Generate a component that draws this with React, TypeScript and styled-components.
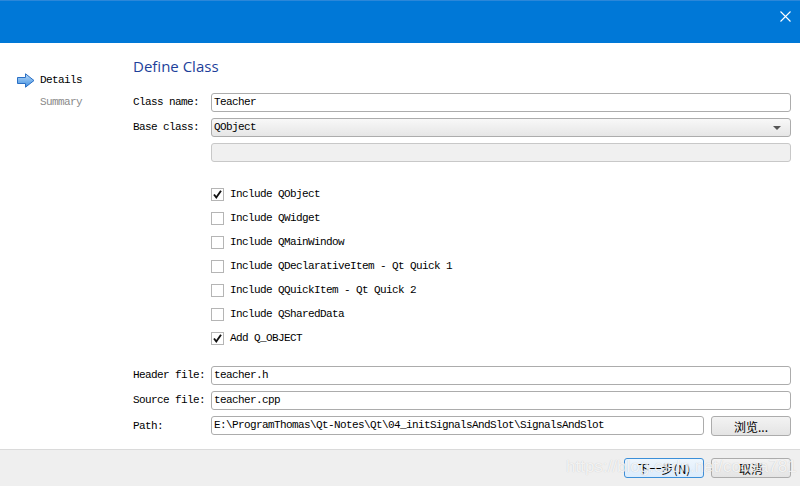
import React from 'react';
import styled, { createGlobalStyle } from 'styled-components';

const GlobalStyle = createGlobalStyle`
  html, body {
    margin: 0;
    padding: 0;
    background: #ffffff;
  }
`;

const mono = `"Liberation Mono", "Noto Sans CJK SC", monospace`;

const Window = styled.div`
  width: 800px;
  height: 486px;
  display: flex;
  flex-direction: column;
  overflow: hidden;
  background: #ffffff;
  font-family: ${mono};
  font-size: 11px;
  letter-spacing: -0.6px;
  color: #000;
`;

const TitleBar = styled.div`
  height: 42px;
  flex-shrink: 0;
  background: #0078d7;
  border-top: 1px solid #2b87d9;
  display: flex;
  justify-content: flex-end;
  align-items: flex-start;
`;

const CloseButton = styled.div`
  width: 24px;
  height: 30px;
  margin-right: 3px;
  display: flex;
  align-items: center;
  justify-content: center;
`;

const Body = styled.div`
  flex: 1;
  display: flex;
`;

const Nav = styled.div`
  width: 132px;
  flex-shrink: 0;
  padding: 26px 0 0 17px;
  box-sizing: border-box;
  display: flex;
  flex-direction: column;
`;

const NavItem = styled.div<{ $active?: boolean }>`
  height: 22px;
  display: flex;
  align-items: center;
  padding-left: ${({ $active }) => ($active ? '0' : '23px')};
  gap: 5px;
  color: ${({ $active }) => ($active ? '#000' : '#8a8a8a')};
`;

const Main = styled.div`
  flex: 1;
  padding: 12px 9px 0 1px;
  display: flex;
  flex-direction: column;
`;

const Title = styled.div`
  font-family: "Open Sans", "Liberation Sans", sans-serif;
  font-size: 15px;
  letter-spacing: 0;
  line-height: 22px;
  height: 22px;
  color: #1d3f9a;
  margin-bottom: 16px;
`;

const FormGrid = styled.div<{ $gap: number }>`
  display: grid;
  grid-template-columns: 78px 1fr;
  row-gap: ${({ $gap }) => $gap}px;
  align-items: center;
`;

const Label = styled.div`
  line-height: 19px;
  white-space: nowrap;
`;

const Field = styled.div<{ $disabled?: boolean }>`
  height: 19px;
  box-sizing: border-box;
  border: 1px solid ${({ $disabled }) => ($disabled ? '#c8c8c8' : '#acacac')};
  border-radius: 3px;
  background: ${({ $disabled }) => ($disabled ? '#f0f0f0' : '#ffffff')};
  padding: 0 2px;
  line-height: 17px;
  white-space: nowrap;
  overflow: hidden;
`;

const Combo = styled(Field)`
  background: linear-gradient(#f8f8f8, #e6e6e6);
  display: flex;
  justify-content: space-between;
  align-items: center;
  padding-right: 9px;
`;

const ComboArrow = styled.span`
  width: 0;
  height: 0;
  border-left: 4px solid transparent;
  border-right: 4px solid transparent;
  border-top: 4px solid #555;
`;

const Checks = styled.div`
  margin: 20px 0 16px 78px;
  display: flex;
  flex-direction: column;
`;

const CheckRow = styled.div`
  height: 24px;
  display: flex;
  align-items: center;
  gap: 6px;
`;

const Box = styled.span`
  width: 13px;
  height: 13px;
  box-sizing: border-box;
  border: 1px solid #b5b5b5;
  background: #fff;
  display: flex;
  align-items: center;
  justify-content: center;
`;

const PathRow = styled.div`
  display: flex;
  gap: 7px;
`;

const Button = styled.div<{ $default?: boolean }>`
  width: 80px;
  height: 20px;
  box-sizing: border-box;
  border: 1px solid ${({ $default }) => ($default ? '#3c8fd8' : '#acacac')};
  border-radius: 3px;
  background: ${({ $default }) =>
    $default ? 'linear-gradient(#eef6fd, #dcecfc)' : 'linear-gradient(#f3f3f3, #e4e4e4)'};
  display: flex;
  align-items: center;
  justify-content: center;
  font-family: "Noto Sans CJK SC", ${mono};
  font-size: 12px;
  letter-spacing: 0;
  flex-shrink: 0;
`;

const Footer = styled.div`
  height: 37px;
  flex-shrink: 0;
  border-top: 1px solid #dadada;
  background: #efefef;
  display: flex;
  justify-content: flex-end;
  align-items: flex-start;
  gap: 7px;
  padding: 8px 9px 0 0;
  box-sizing: border-box;
  position: relative;
`;

const Watermark = styled.div`
  position: absolute;
  left: 566px;
  top: 7px;
  font-family: "Liberation Sans", sans-serif;
  font-size: 17px;
  letter-spacing: 0;
  color: rgba(255, 255, 255, 0.8);
  text-shadow: 0 0 1px rgba(0, 0, 0, 0.2);
  pointer-events: none;
  white-space: nowrap;
`;

const Check = () => (
  <svg width="11" height="11" viewBox="0 0 11 11">
    <path d="M2 5.5 L4.3 8.5 L9 1.8" fill="none" stroke="#111" strokeWidth="1.9" />
  </svg>
);

const Arrow = () => (
  <svg width="18" height="15" viewBox="0 0 18 15">
    <defs>
      <linearGradient id="ag" x1="0" y1="0" x2="0" y2="1">
        <stop offset="0" stopColor="#bcdcfa" />
        <stop offset="1" stopColor="#3d8ee0" />
      </linearGradient>
    </defs>
    <polygon
      points="0.5,4.5 8.5,4.5 8.5,0.8 17,7.5 8.5,14.2 8.5,10.5 0.5,10.5"
      fill="url(#ag)"
      stroke="#2a6fc4"
      strokeWidth="1"
    />
  </svg>
);

const options = [
  { label: 'Include QObject', checked: true },
  { label: 'Include QWidget', checked: false },
  { label: 'Include QMainWindow', checked: false },
  { label: 'Include QDeclarativeItem - Qt Quick 1', checked: false },
  { label: 'Include QQuickItem - Qt Quick 2', checked: false },
  { label: 'Include QSharedData', checked: false },
  { label: 'Add Q_OBJECT', checked: true },
];

const App: React.FC = () => {
  return (
    <>
      <GlobalStyle />
      <Window>
        <TitleBar>
          <CloseButton>
            <svg width="11" height="11" viewBox="0 0 11 11">
              <path d="M0.5 0.5 L10.5 10.5 M10.5 0.5 L0.5 10.5" stroke="#fff" strokeWidth="1.1" />
            </svg>
          </CloseButton>
        </TitleBar>
        <Body>
          <Nav>
            <NavItem $active>
              <Arrow />
              Details
            </NavItem>
            <NavItem>Summary</NavItem>
          </Nav>
          <Main>
            <Title>Define Class</Title>
            <FormGrid $gap={6}>
              <Label>Class name:</Label>
              <Field>Teacher</Field>
              <Label>Base class:</Label>
              <Combo>
                <span>QObject</span>
                <ComboArrow />
              </Combo>
              <span />
              <Field $disabled />
            </FormGrid>
            <Checks>
              {options.map((o) => (
                <CheckRow key={o.label}>
                  <Box>{o.checked && <Check />}</Box>
                  {o.label}
                </CheckRow>
              ))}
            </Checks>
            <FormGrid $gap={6}>
              <Label>Header file:</Label>
              <Field>teacher.h</Field>
              <Label>Source file:</Label>
              <Field>teacher.cpp</Field>
              <Label>Path:</Label>
              <PathRow>
                <Field style={{ flex: 1 }}>E:\ProgramThomas\Qt-Notes\Qt\04_initSignalsAndSlot\SignalsAndSlot</Field>
                <Button>浏览...</Button>
              </PathRow>
            </FormGrid>
          </Main>
        </Body>
        <Footer>
          <Button $default>下一步(N)</Button>
          <Button>取消</Button>
          <Watermark>https://blog.csdn.net/cocoa781</Watermark>
        </Footer>
      </Window>
    </>
  );
};

export default App;
